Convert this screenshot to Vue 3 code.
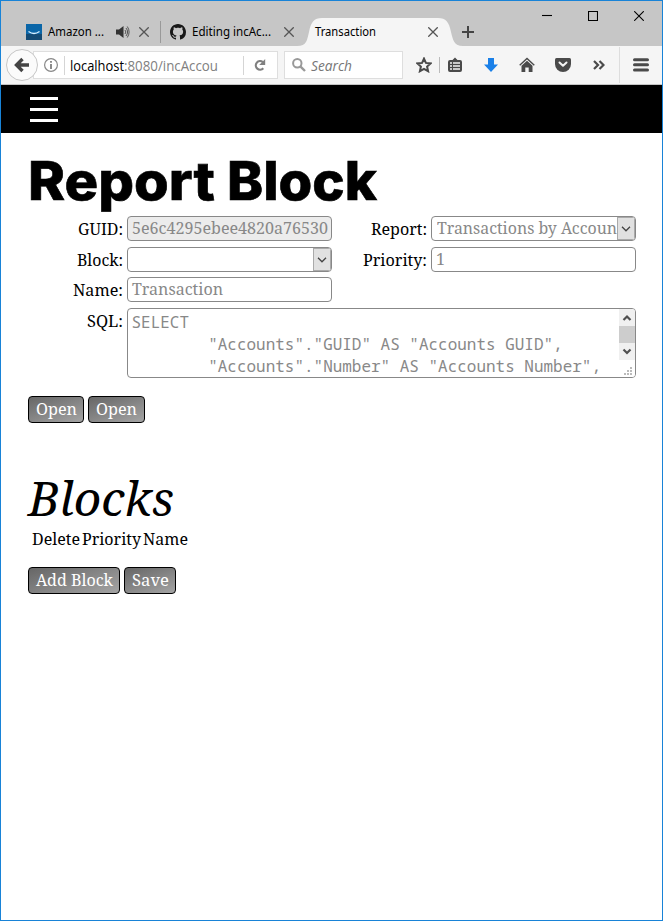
<script setup>
import { h } from 'vue'

// Single line of text fitted to a width; the bottom of the box is the baseline.
const FitText = (props) =>
  h('svg', { class: 'fit', width: props.w, height: props.b }, [
    h('text', { x: 0, y: props.b, textLength: props.w, lengthAdjust: 'spacingAndGlyphs' }, props.t),
  ])
FitText.props = ['t', 'w', 'b']

const sql = `SELECT
        "Accounts"."GUID" AS "Accounts GUID",
        "Accounts"."Number" AS "Accounts Number",`
</script>

<template>
  <div class="window">
    <header class="titlebar">
      <div class="tab first">
        <svg width="16" height="16">
          <rect width="16" height="16" fill="#0a66a8" />
          <rect y="10" width="16" height="6" fill="#134a74" />
          <path d="M2.5 7.5Q8 11.5 13.5 7.5" fill="none" stroke="#d8efff" stroke-width="1.4" />
        </svg>
        <FitText class="tab-text" t="Amazon ..." :w="56" :b="16" />
        <svg class="speaker" width="14" height="14">
          <path d="M0 4.5H3L7.5 1V13L3 9.5H0Z" fill="#333" />
          <path d="M9 5q1.700 2 0 4M10 3q3.200 4 0 8M11.300 1.500q3.600 5.500 0 11" fill="none" stroke="#555" stroke-width="1" />
        </svg>
        <svg class="close" width="10" height="10"><path d="M.3.3l9.400 9.400M9.700.3L.3 9.700" /></svg>
      </div>
      <div class="tab second">
        <svg width="16" height="16" viewBox="0 0 16 16">
          <path fill="#181818" d="M8 0C3.580 0 0 3.580 0 8c0 3.540 2.290 6.530 5.470 7.590.4.07.55-.17.55-.38 0-.19-.01-.82-.01-1.490-2.010.37-2.530-.49-2.690-.94-.09-.23-.48-.94-.82-1.130-.28-.15-.68-.52-.01-.53.63-.01 1.080.58 1.230.82.72 1.210 1.870.87 2.330.66.07-.52.28-.87.51-1.070-1.780-.2-3.640-.89-3.640-3.950 0-.87.31-1.590.82-2.150-.08-.2-.36-1.020.08-2.120 0 0 .67-.21 2.200.82.64-.18 1.320-.27 2-.27s1.360.09 2 .27c1.530-1.040 2.200-.82 2.200-.82.44 1.100.16 1.920.08 2.120.51.56.82 1.270.82 2.150 0 3.070-1.870 3.750-3.650 3.950.29.25.54.73.54 1.480 0 1.070-.01 1.930-.01 2.200 0 .21.15.46.55.38A8 8 0 0 0 16 8c0-4.420-3.580-8-8-8z" />
        </svg>
        <FitText class="tab-text" t="Editing incAc..." :w="79" :b="16" />
        <svg class="close" width="10" height="10"><path d="M.3.3l9.400 9.400M9.700.3L.3 9.700" /></svg>
      </div>
      <div class="tab active">
        <svg class="shape" width="166" height="28">
          <path d="M0 28C10 28 10 22 12 14C14 4 17 0 25 0H141C149 0 152 4 154 14C156 22 157 28 166 28Z" fill="#f5f5f5" />
        </svg>
        <FitText class="tab-text" t="Transaction" :w="61" :b="16" />
        <svg class="close" width="10" height="10"><path d="M.3.3l9.400 9.400M9.700.3L.3 9.700" /></svg>
      </div>
      <svg class="plus" width="12" height="12"><path d="M6 0V12M0 6H12" stroke="#444" stroke-width="2" /></svg>
      <div class="controls">
        <svg width="10" height="10"><path d="M0 4.500H10" /></svg>
        <svg width="10" height="10"><path d="M.5.5H9.500V9.500H.5Z" /></svg>
        <svg width="10" height="10"><path d="M.2.2l9.600 9.600M9.800.2L.2 9.800" /></svg>
      </div>
    </header>

    <div class="toolbar">
      <svg class="back" width="32" height="32">
        <circle cx="16" cy="16" r="15.500" fill="#fbfbfb" stroke="#c6c6c6" />
        <path d="M23 16H11.500M16.500 10L10.500 16L16.500 22" fill="none" stroke="#444" stroke-width="3.400" />
      </svg>
      <div class="url">
        <svg width="14" height="14">
          <circle cx="7" cy="7" r="6.400" fill="none" stroke="#888" stroke-width="1.200" />
          <path d="M7 6V11M7 3V4.800" stroke="#777" stroke-width="1.700" />
        </svg>
        <i class="rule"></i>
        <FitText class="host" t="localhost" :w="54" :b="18" />
        <FitText class="path" t=":8080/incAccou" :w="94" :b="18" />
        <i class="rule end"></i>
        <svg class="reload" width="12" height="12">
          <path d="M8.800 3A4.300 4.300 0 1 0 9.300 9.300" fill="none" stroke="#808080" stroke-width="2.200" />
          <path d="M11.200 0V6H5.200Z" fill="#808080" />
        </svg>
      </div>
      <div class="search">
        <svg width="14" height="14">
          <circle cx="5.300" cy="5.300" r="4.200" fill="none" stroke="#999" stroke-width="2" />
          <path d="M8.300 8.300L13 13" stroke="#999" stroke-width="2.400" />
        </svg>
        <FitText class="search-text" t="Search" :w="41" :b="18" />
      </div>
      <div class="tools">
        <svg width="16" height="16">
          <path d="M8 1.600L9.900 5.900L14.600 6.400L11.100 9.500L12.100 14.200L8 11.800L3.900 14.200L4.900 9.500L1.400 6.400L6.100 5.900Z" fill="none" stroke="#4a4a4a" stroke-width="2" />
        </svg>
        <i class="tool-rule"></i>
        <svg width="14" height="16">
          <path d="M2 3H4.500L7 .5L9.500 3H12Q14 3 14 5V13Q14 15 12 15H2Q0 15 0 13V5Q0 3 2 3Z" fill="#4a4a4a" />
          <path d="M2 6H4M5 6H12M2 9H4M5 9H12M2 12H4M5 12H12" stroke="#f5f5f5" stroke-width="1.600" />
        </svg>
        <svg class="down" width="14" height="16"><path d="M4 1H10V7.500H14L7 15L0 7.500H4Z" fill="#1a80e8" /></svg>
        <svg class="home" width="16" height="16">
          <path d="M.7 8.300L8 1.500L15.300 8.300" fill="none" stroke="#4a4a4a" stroke-width="1.400" />
          <path d="M2.500 8.700L8 3.700L13.500 8.700V15H9.700V10.500H6.300V15H2.500Z" fill="#4a4a4a" />
        </svg>
        <svg class="pocket" width="16" height="16">
          <path d="M1.500 1H14.500Q16 1 16 2.500V7A8 8 0 0 1 0 7V2.500Q0 1 1.500 1Z" fill="#4a4a4a" />
          <path d="M4.500 5.500L8 8.800L11.500 5.500" fill="none" stroke="#f5f5f5" stroke-width="2" stroke-linecap="round" stroke-linejoin="round" />
        </svg>
        <svg class="more" width="12" height="10">
          <path d="M1 1L5 5L1 9M6.500 1L10.500 5L6.500 9" fill="none" stroke="#4a4a4a" stroke-width="2.200" />
        </svg>
        <i class="menu-rule"></i>
        <svg class="menu" width="16" height="14">
          <path d="M1.500 1.700H14.500M1.500 6.800H14.500M1.500 11.900H14.500" stroke="#4a4a4a" stroke-width="3" stroke-linecap="round" />
        </svg>
      </div>
    </div>

    <nav class="nav">
      <svg width="28" height="26"><path d="M0 1.500H28M0 12.500H28M0 23.500H28" stroke="#fff" stroke-width="3" /></svg>
    </nav>

    <main>
      <h1>
        <FitText class="title" t="Report" :w="187" :b="67" />
        <FitText class="title" t="Block" :w="150" :b="67" />
      </h1>
      <div class="form">
        <FitText class="label" t="GUID:" :w="45" :b="19" />
        <div class="field disabled"><FitText t="5e6c4295ebee4820a76530" :w="196" :b="17" /></div>
        <FitText class="label" t="Report:" :w="56" :b="19" />
        <div class="field select">
          <div class="value"><FitText t="Transactions by Accoun" :w="180" :b="17" /></div>
          <span class="arrow"><svg width="10" height="6"><path d="M1 .8L5 4.800L9 .8" /></svg></span>
        </div>

        <FitText class="label" t="Block:" :w="46" :b="19" />
        <div class="field select">
          <div class="value"></div>
          <span class="arrow"><svg width="10" height="6"><path d="M1 .8L5 4.800L9 .8" /></svg></span>
        </div>
        <FitText class="label" t="Priority:" :w="64" :b="19" />
        <div class="field"><FitText t="1" :w="9" :b="17" /></div>

        <FitText class="label" t="Name:" :w="50" :b="19" />
        <div class="field name"><FitText t="Transaction" :w="91" :b="17" /></div>

        <FitText class="label" t="SQL:" :w="36" :b="19" />
        <div class="area">
          <pre>{{ sql }}</pre>
          <div class="scroll">
            <svg width="16" height="17"><path d="M4.500 11L8 7.500L11.500 11" /></svg>
            <i></i>
            <svg width="16" height="17"><path d="M4.500 6.500L8 10L11.500 6.500" /></svg>
            <svg class="grip" width="16" height="17">
              <path d="M11 8h2M8 11h2M11 11h2M5 14h2M8 14h2M11 14h2" />
            </svg>
          </div>
        </div>
      </div>

      <div class="buttons">
        <button><FitText t="Open" :w="41" :b="18" /></button>
        <button class="wide"><FitText t="Open" :w="41" :b="18" /></button>
      </div>

      <FitText class="subtitle" t="Blocks" :w="146" :b="93" />
      <div class="columns">
        <FitText t="Delete" :w="48" :b="29" />
        <FitText t="Priority" :w="59" :b="29" />
        <FitText t="Name" :w="45" :b="29" />
      </div>
      <div class="buttons lower">
        <button><FitText t="Add Block" :w="77" :b="18" /></button>
        <button><FitText t="Save" :w="37" :b="18" /></button>
      </div>
    </main>
  </div>
</template>

<style>
body { margin: 0; }
.fit { display: block; overflow: visible; fill: currentColor; flex: none; }
</style>

<style scoped>
* { box-sizing: border-box; }
svg { display: block; flex: none; }
.window {
  width: 663px; height: 921px; border: 1px solid #1883d7; background: #fff; overflow: hidden;
  font: 16px "Noto Serif", "Droid Serif", "DejaVu Serif Condensed", "DejaVu Serif", serif; color: #000;
}
.titlebar { height: 45px; background: #c6c6c6; display: flex; padding-left: 15px; }
.tab { position: relative; width: 144px; height: 28px; margin-top: 17px; padding: 6px 11px 0 10px; display: flex; }
.tab-text { margin-left: 6px; margin-top: -4px; font-family: "Noto Sans", "Open Sans", sans-serif; font-size: 12px; }
.tab.first::after { content: ""; width: 1px; height: 22px; background: #999; position: absolute; right: -1px; top: 3px; }
.speaker { margin: 1px 0 0 12px; }
.close { margin: 3px 0 0 auto; fill: none; stroke: #555; stroke-width: 1.3; }
.tab.second { width: 145px; }
.shape { position: absolute; left: -8px; top: 0; }
.active .tab-text, .active .close { position: relative; }
.active .tab-text { margin-left: 0; }
.plus { margin: 25px 0 0 13px; }
.controls { margin: 10px 18px 0 auto; display: flex; gap: 36px; fill: none; stroke: #000; stroke-width: 1.1; }

.toolbar { height: 39px; background: #f5f5f5; border-bottom: 1px solid #c4c4c4; display: flex; align-items: center; padding-left: 5px; }
.back { position: relative; z-index: 1; }
.url, .search { height: 28px; background: #fff; border: 1px solid #dedede; display: flex; align-items: center; }
.url { width: 245px; margin-left: -5px; padding-left: 10px; }
.rule { width: 1px; height: 19px; background: #d5d5d5; margin: 0 5px 0 6px; }
.rule.end { margin: 0 10px 0 25px; }
.host, .path { font-family: "Open Sans", "Noto Sans", sans-serif; font-size: 14px; margin-top: -6px; }
.path { color: #808080; }
.search { width: 119px; margin-left: 6px; padding-left: 7px; }
.search-text { margin: -6px 0 0 5px; font: italic 14px "Open Sans", "Noto Sans", sans-serif; color: #767676; }
.tools { display: flex; align-items: center; height: 38px; margin-left: 13px; }
.tool-rule { width: 1px; height: 16px; background: #bbb; margin: 0 8px 0 7px; }
.down { margin-left: 22px; }
.home { margin-left: 21px; }
.pocket { margin-left: 20px; }
.more { margin-left: 22px; }
.menu-rule { width: 1px; height: 36px; background: #ddd; margin-left: 14px; }
.menu { margin-left: 13px; }

.nav { height: 48px; background: #000; padding: 12px 0 0 29px; }
main { padding-left: 27px; }
h1 { margin: 0; display: flex; gap: 12px; font: 800 53px Inter, sans-serif; stroke: #000; stroke-width: .6px; }
.form {
  display: grid; margin-top: 16px; justify-items: end; align-items: start;
  grid-template-columns: 95px 209px 95px 209px; grid-template-rows: 31px 30px 31px 70px;
}
.field { width: 205px; height: 25px; border: 1px solid #888; border-radius: 4px; padding: 0 0 0 3.5px; color: #888; overflow: hidden; background: #fff; }
.disabled { background: #ececec; }
.select { display: flex; justify-content: space-between; padding-left: 5px; }
.value { width: 180px; height: 23px; overflow: hidden; }
.arrow { width: 18px; height: 23px; background: #e1e1e1; border: 1px solid #aaa; display: grid; place-items: center; }
.arrow svg { fill: none; stroke: #444; stroke-width: 1.3; }
.label { margin-right: .4px; }
.name { grid-column: 2 / span 3; justify-self: start; margin-left: 4px; }
.area { grid-column: 2 / span 3; width: 509px; height: 70px; border: 1px solid #888; border-radius: 4px; display: flex; justify-content: space-between; overflow: hidden; }
pre { margin: 2px 0 0 3.5px; font: 15.97px/22px "Noto Sans Mono", "Droid Sans Mono", "DejaVu Sans Mono", monospace; color: #888; }
.scroll { width: 16px; height: 68px; fill: none; stroke: #505050; stroke-width: 2.2; }
.scroll svg { background: #f0f0f0; }
.scroll i { display: block; height: 17px; background: #cdcdcd; }
.scroll .grip { background: #fff; stroke: #bbb; stroke-width: 2; }
.buttons { display: flex; gap: 4px; margin-top: 18px; }
button {
  height: 27px; padding: 0 6.5px; border: 1px solid #000; border-radius: 4px; color: #fff;
  font: inherit; background: linear-gradient(160deg, #666, #a4a4a4); display: flex; align-items: flex-start;
}
.wide { padding: 0 7px; }
.subtitle { font-size: 48px; font-style: italic; margin-left: -.5px; }
.columns { display: flex; gap: 2px; padding-left: 3.6px; }
.lower { margin-top: 22px; }
</style>
